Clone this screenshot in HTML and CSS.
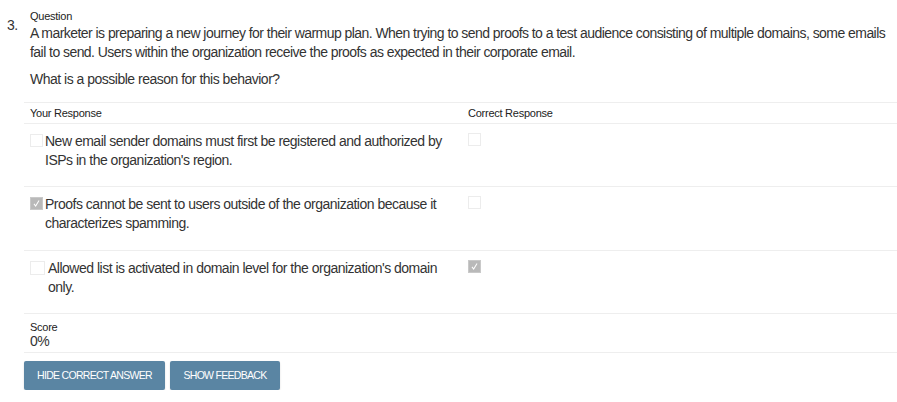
FILE: index.html
```html
<!DOCTYPE html>
<html>
<head>
<meta charset="utf-8">
<link rel="stylesheet" href="styles.css">
</head>
<body>
<div class="item">
  <div class="num">3.</div>
  <div class="main">
    <div class="question">
      <div class="label">Question</div>
      <p class="stem">A marketer is preparing a new journey for their warmup plan. When trying to send proofs to a test audience consisting of multiple domains, some emails fail to send. Users within the organization receive the proofs as expected in their corporate email.</p>
      <p class="ask">What is a possible reason for this behavior?</p>
    </div>
    <div class="table">
      <div class="row head">
        <div class="cell c1">Your Response</div>
        <div class="cell c2">Correct Response</div>
      </div>
      <div class="row">
        <div class="cell c1"><span class="box"></span><span class="opt">New email sender domains must first be registered and authorized by ISPs in the organization's region.</span></div>
        <div class="cell c2"><span class="box"></span></div>
      </div>
      <div class="row">
        <div class="cell c1"><span class="box checked"><svg viewBox="0 0 13 13"><path d="M3.5 7 L5.5 9.5 L9.5 3" fill="none" stroke="#fff" stroke-width="1.2"/></svg></span><span class="opt">Proofs cannot be sent to users outside of the organization because it characterizes spamming.</span></div>
        <div class="cell c2"><span class="box"></span></div>
      </div>
      <div class="row">
        <div class="cell c1"><span class="box wide"></span><span class="opt">Allowed list is activated in domain level for the organization's domain only.</span></div>
        <div class="cell c2"><span class="box checked"><svg viewBox="0 0 13 13"><path d="M3.5 7 L5.5 9.5 L9.5 3" fill="none" stroke="#fff" stroke-width="1.2"/></svg></span></div>
      </div>
      <div class="score">
        <div class="label">Score</div>
        <div class="pct">0%</div>
      </div>
    </div>
    <div class="buttons">
      <button class="btn hide">HIDE CORRECT ANSWER</button>
      <button class="btn show">SHOW FEEDBACK</button>
    </div>
  </div>
</div>
</body>
</html>
```
FILE: styles.css
```css
html, body {
  margin: 0;
  padding: 0;
  background: #fff;
}
body {
  font-family: "Liberation Sans", Arial, sans-serif;
  color: #333;
  font-size: 14px;
  letter-spacing: -0.5px;
}
.item {
  display: flex;
}
.num {
  width: 17px;
  padding-left: 7px;
  padding-top: 16px;
  font-size: 14px;
  line-height: 19px;
}
.main {
  flex: 1;
}
.question {
  padding: 10px 0 0 6px;
}
.label {
  font-size: 11px;
  line-height: 13px;
  color: #222;
  letter-spacing: -0.25px;
}
.stem {
  margin: 1px 0 0 0;
  line-height: 19px;
  letter-spacing: -0.55px;
}
.ask {
  margin: 8px 0 13px 0;
  line-height: 19px;
}
.table {
  border-top: 1px solid #eee;
}
.row {
  display: flex;
  border-bottom: 1px solid #eee;
}
.cell {
  padding: 8px 6px 16.33px 6px;
  display: flex;
  align-items: flex-start;
}
.c1 {
  width: 426px;
}
.c2 {
  flex: 1;
}
.head .cell {
  padding: 4px 6px 4px 6px;
  font-size: 11px;
  line-height: 12px;
  color: #222;
  letter-spacing: -0.25px;
}
.opt {
  line-height: 19px;
  flex: 1;
  padding-right: 14px;
}
.box {
  width: 11px;
  height: 11px;
  border: 1px solid #ececec;
  background: #fff;
  margin-top: 2px;
  margin-right: 2px;
  flex: none;
  display: block;
}
.c2 .box {
  margin-top: 1px;
}
.box.wide {
  width: 13px;
  height: 12px;
  margin-right: 3px;
}
.box.checked {
  background: #b9b9b9;
  border-color: #c9c9c9;
}
.box svg {
  width: 11px;
  height: 11px;
  display: block;
}
.score {
  padding: 7px 6px 4px 6px;
  border-bottom: 1px solid #eee;
}
.pct {
  font-size: 14px;
  line-height: 14px;
}
.buttons {
  display: flex;
  gap: 5px;
  padding-top: 8px;
}
.btn {
  font-family: "Liberation Sans", Arial, sans-serif;
  font-size: 10.5px;
  letter-spacing: -0.7px;
  white-space: nowrap;
  color: #fff;
  background: #5a85a3;
  border: none;
  border-radius: 2px;
  height: 29px;
  padding: 0;
  text-align: center;
  box-shadow: 0 1px 2px rgba(0,0,0,0.15);
}
.btn.hide {
  width: 141px;
}
.btn.show {
  width: 110px;
}
```
